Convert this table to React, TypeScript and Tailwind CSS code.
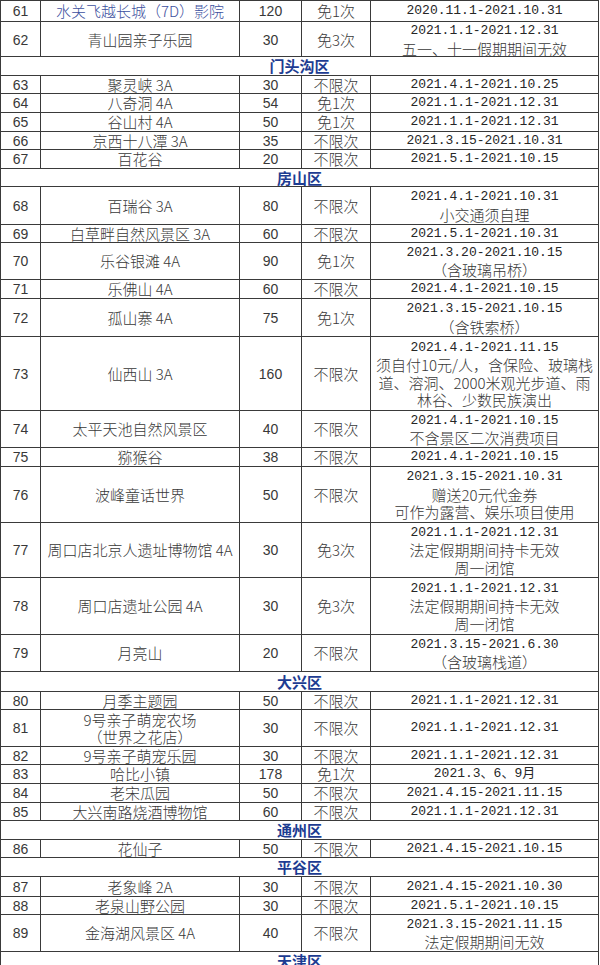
import React from 'react';

type Item = {
  no: number;
  name: string[];
  price: string;
  times: string;
  date: string;
  notes?: string[];
  h: string;
  blue?: boolean;
};

type Section = { section: string; h: string };

type Row = Item | Section;

const D1 = '2021.1.1-2021.12.31';

const rows: Row[] = [
  { no: 61, name: ['水关飞越长城（7D）影院'], price: '120', times: '免1次', date: '2020.11.1-2021.10.31', h: 'h-[21px]', blue: true },
  { no: 62, name: ['青山园亲子乐园'], price: '30', times: '免3次', date: D1, notes: ['五一、十一假期期间无效'], h: 'h-[35px]' },
  { section: '门头沟区', h: 'h-[19px]' },
  { no: 63, name: ['聚灵峡 3A'], price: '30', times: '不限次', date: '2021.4.1-2021.10.25', h: 'h-[18px]' },
  { no: 64, name: ['八奇洞 4A'], price: '54', times: '免1次', date: D1, h: 'h-[19px]' },
  { no: 65, name: ['谷山村 4A'], price: '50', times: '免1次', date: D1, h: 'h-[19px]' },
  { no: 66, name: ['京西十八潭 3A'], price: '35', times: '不限次', date: '2021.3.15-2021.10.31', h: 'h-[18px]' },
  { no: 67, name: ['百花谷'], price: '20', times: '不限次', date: '2021.5.1-2021.10.15', h: 'h-[19px]' },
  { section: '房山区', h: 'h-[18px]' },
  { no: 68, name: ['百瑞谷 3A'], price: '80', times: '不限次', date: '2021.4.1-2021.10.31', notes: ['小交通须自理'], h: 'h-[38px]' },
  { no: 69, name: ['白草畔自然风景区 3A'], price: '60', times: '不限次', date: '2021.5.1-2021.10.31', h: 'h-[18px]' },
  { no: 70, name: ['乐谷银滩 4A'], price: '90', times: '免1次', date: '2021.3.20-2021.10.15', notes: ['（含玻璃吊桥）'], h: 'h-[37px]' },
  { no: 71, name: ['乐佛山 4A'], price: '60', times: '不限次', date: '2021.4.1-2021.10.15', h: 'h-[19px]' },
  { no: 72, name: ['孤山寨 4A'], price: '75', times: '免1次', date: '2021.3.15-2021.10.15', notes: ['（含铁索桥）'], h: 'h-[38px]' },
  {
    no: 73,
    name: ['仙西山 3A'],
    price: '160',
    times: '不限次',
    date: '2021.4.1-2021.11.15',
    notes: ['须自付10元/人，含保险、玻璃栈', '道、溶洞、2000米观光步道、雨', '林谷、少数民族演出'],
    h: 'h-[74px]',
  },
  { no: 74, name: ['太平天池自然风景区'], price: '40', times: '不限次', date: '2021.4.1-2021.10.15', notes: ['不含景区二次消费项目'], h: 'h-[37px]' },
  { no: 75, name: ['猕猴谷'], price: '38', times: '不限次', date: '2021.4.1-2021.10.15', h: 'h-[19px]' },
  { no: 76, name: ['波峰童话世界'], price: '50', times: '不限次', date: '2021.3.15-2021.10.31', notes: ['赠送20元代金券', '可作为露营、娱乐项目使用'], h: 'h-[56px]' },
  { no: 77, name: ['周口店北京人遗址博物馆 4A'], price: '30', times: '免3次', date: D1, notes: ['法定假期期间持卡无效', '周一闭馆'], h: 'h-[55px]' },
  { no: 78, name: ['周口店遗址公园 4A'], price: '30', times: '免3次', date: D1, notes: ['法定假期期间持卡无效', '周一闭馆'], h: 'h-[57px]' },
  { no: 79, name: ['月亮山'], price: '20', times: '不限次', date: '2021.3.15-2021.6.30', notes: ['（含玻璃栈道）'], h: 'h-[37px]' },
  { section: '大兴区', h: 'h-[20px]' },
  { no: 80, name: ['月季主题园'], price: '50', times: '不限次', date: D1, h: 'h-[18px]' },
  { no: 81, name: ['9号亲子萌宠农场', '（世界之花店）'], price: '30', times: '不限次', date: D1, h: 'h-[37px]' },
  { no: 82, name: ['9号亲子萌宠乐园'], price: '30', times: '不限次', date: D1, h: 'h-[18px]' },
  { no: 83, name: ['哈比小镇'], price: '178', times: '免1次', date: '2021.3、6、9月', h: 'h-[19px]' },
  { no: 84, name: ['老宋瓜园'], price: '50', times: '不限次', date: '2021.4.15-2021.11.15', h: 'h-[19px]' },
  { no: 85, name: ['大兴南路烧酒博物馆'], price: '60', times: '不限次', date: D1, h: 'h-[18px]' },
  { section: '通州区', h: 'h-[19px]' },
  { no: 86, name: ['花仙子'], price: '50', times: '不限次', date: '2021.4.15-2021.10.15', h: 'h-[18px]' },
  { section: '平谷区', h: 'h-[19px]' },
  { no: 87, name: ['老象峰 2A'], price: '30', times: '不限次', date: '2021.4.15-2021.10.30', h: 'h-[20px]' },
  { no: 88, name: ['老泉山野公园'], price: '30', times: '不限次', date: '2021.5.1-2021.10.15', h: 'h-[18px]' },
  { no: 89, name: ['金海湖风景区 4A'], price: '40', times: '不限次', date: '2021.3.15-2021.11.15', notes: ['法定假期期间无效'], h: 'h-[37px]' },
  { section: '天津区', h: 'h-[19px]' },
];

const cell = 'flex flex-col items-center justify-center whitespace-nowrap text-center border-r border-[#3a3a3a]';
const sans = "font-['Liberation_Sans','Noto_Sans_CJK_SC',sans-serif] text-[14px]";
const cjk = "font-['Noto_Sans_CJK_SC',sans-serif] text-[15px] font-light";
const mono = "font-['Liberation_Mono','Noto_Sans_CJK_SC',monospace] text-[13px] text-[#262626]";

function TableRow({ row }: { row: Row }) {
  if ('section' in row) {
    return (
      <div className={`flex items-center justify-center border-b border-r border-[#3a3a3a] ${row.h}`}>
        <span className="font-['Noto_Sans_CJK_SC',sans-serif] text-[15px] font-bold leading-[16px] text-[#1d3c92]">{row.section}</span>
      </div>
    );
  }
  const multi = (row.notes?.length ?? 0) > 0 || row.name.length > 1;
  const lead = multi ? 'leading-[17.5px]' : 'leading-[16px]';
  return (
    <div className={`grid grid-cols-[40px_199px_62px_69px_228px] border-b border-[#3a3a3a] ${row.h}`}>
      <div className={`${cell} ${sans} leading-[16px]`}>{row.no}</div>
      <div className={`${cell} ${cjk} ${lead} ${row.blue ? 'text-[#3c4f9e]' : ''}`}>
        {row.name.map((n) => (
          <span key={n}>{n}</span>
        ))}
      </div>
      <div className={`${cell} ${sans} leading-[16px]`}>{row.price}</div>
      <div className={`${cell} ${cjk} leading-[16px]`}>{row.times}</div>
      <div className={`${cell} ${lead}`}>
        <span className={mono}>{row.date}</span>
        {row.notes?.map((n) => (
          <span key={n} className={cjk}>
            {n}
          </span>
        ))}
      </div>
    </div>
  );
}

export default function App() {
  return (
    <div className="h-[965px] w-[600px] overflow-hidden bg-white text-[#383838]">
      <div className="w-[599px] border-l border-t border-[#3a3a3a]">
        {rows.map((r, i) => (
          <TableRow key={i} row={r} />
        ))}
      </div>
    </div>
  );
}
